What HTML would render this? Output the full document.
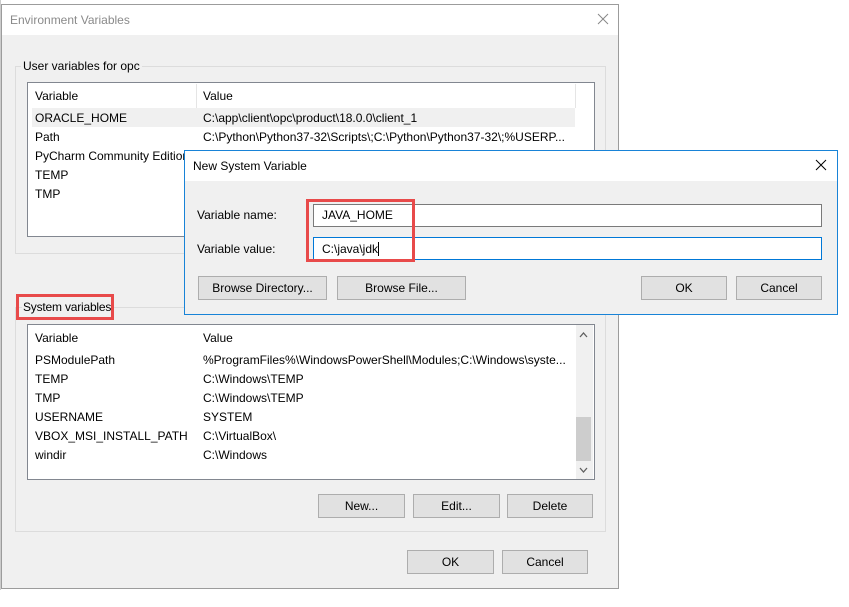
<!DOCTYPE html>
<html><head><style>
*{box-sizing:border-box;margin:0;padding:0}
body{width:849px;height:607px;background:#fff;position:relative;overflow:hidden;font-family:"Liberation Sans",sans-serif;font-size:12px;color:#000}
.a{position:absolute}
.t{position:absolute;white-space:nowrap;line-height:14px}
.btn{position:absolute;background:#e1e1e1;border:1px solid #adadad;text-align:center;line-height:22px;font-size:12px}
.box{position:absolute;background:#fff;border:1px solid #828790}
.red{position:absolute;border:3px solid #e84a4a}
</style></head><body>
<div class="a" style="left:0;top:0;width:1px;height:590px;background:#ccc"></div>
<div class="a" style="left:1px;top:4px;width:618px;height:585px;background:#f0f0f0;border:1px solid #9c9c9c"></div>
<div class="a" style="left:2px;top:5px;width:616px;height:30px;background:#fff"></div>
<div class="t" style="left:10px;top:13px;color:#8a8a8a">Environment Variables</div>
<svg class="a" style="left:597px;top:13px" width="12" height="12"><path d="M1 1L11 11M11 1L1 11" stroke="#888" stroke-width="1"/></svg>
<!-- user group -->
<div class="a" style="left:15px;top:66px;width:591px;height:188px;border:1px solid #dcdcdc"></div>
<div class="t" style="left:21px;top:59px;background:#f0f0f0;padding:0 2px">User variables for opc</div>
<div class="box" style="left:27px;top:82px;width:568px;height:155px"></div>
<div class="a" style="left:196px;top:84px;width:1px;height:24px;background:#e5e5e5"></div>
<div class="a" style="left:575px;top:84px;width:1px;height:24px;background:#e5e5e5"></div>
<div class="a" style="left:32px;top:108px;width:543px;height:19px;background:#f0f0f0"></div>
<div class="t" style="left:35px;top:89px">Variable</div><div class="t" style="left:203px;top:89px">Value</div>
<div class="t" style="left:35px;top:111px">ORACLE_HOME</div><div class="t" style="left:203px;top:111px">C:\app\client\opc\product\18.0.0\client_1</div>
<div class="t" style="left:35px;top:130px">Path</div><div class="t" style="left:203px;top:130px">C:\Python\Python37-32\Scripts\;C:\Python\Python37-32\;%USERP...</div>
<div class="t" style="left:35px;top:149px">PyCharm Community Edition</div>
<div class="t" style="left:35px;top:168px">TEMP</div>
<div class="t" style="left:35px;top:187px">TMP</div>
<!-- system group -->
<div class="a" style="left:15px;top:307px;width:591px;height:225px;border:1px solid #dcdcdc"></div>
<div class="t" style="left:22px;top:300px;background:#f0f0f0;padding:0 1px;letter-spacing:-0.2px">System variables</div>
<div class="red" style="left:16px;top:294px;width:98px;height:26px"></div>
<div class="box" style="left:27px;top:324px;width:568px;height:156px"></div>
<div class="a" style="left:576px;top:325px;width:17px;height:154px;background:#f0f0f0"></div>
<div class="a" style="left:576px;top:417px;width:15px;height:44px;background:#cdcdcd"></div>
<svg class="a" style="left:579px;top:331px" width="10" height="8"><path d="M1 6L4.5 2L8 6" stroke="#606060" fill="none" stroke-width="1.3"/></svg>
<svg class="a" style="left:579px;top:466px" width="10" height="8"><path d="M1 2L4.5 6L8 2" stroke="#606060" fill="none" stroke-width="1.3"/></svg>
<div class="t" style="left:35px;top:331px">Variable</div><div class="t" style="left:203px;top:331px">Value</div>
<div class="t" style="left:35px;top:353px">PSModulePath</div><div class="t" style="left:203px;top:353px">%ProgramFiles%\WindowsPowerShell\Modules;C:\Windows\syste...</div>
<div class="t" style="left:35px;top:372px">TEMP</div><div class="t" style="left:203px;top:372px">C:\Windows\TEMP</div>
<div class="t" style="left:35px;top:391px">TMP</div><div class="t" style="left:203px;top:391px">C:\Windows\TEMP</div>
<div class="t" style="left:35px;top:410px">USERNAME</div><div class="t" style="left:203px;top:410px">SYSTEM</div>
<div class="t" style="left:35px;top:429px">VBOX_MSI_INSTALL_PATH</div><div class="t" style="left:203px;top:429px">C:\VirtualBox\</div>
<div class="t" style="left:35px;top:448px">windir</div><div class="t" style="left:203px;top:448px">C:\Windows</div>
<div class="btn" style="left:318px;top:494px;width:87px;height:24px">New...</div>
<div class="btn" style="left:413px;top:494px;width:87px;height:24px">Edit...</div>
<div class="btn" style="left:507px;top:494px;width:86px;height:24px">Delete</div>
<div class="btn" style="left:407px;top:550px;width:87px;height:24px">OK</div>
<div class="btn" style="left:502px;top:550px;width:86px;height:24px">Cancel</div>
<!-- dialog -->
<div class="a" style="left:184px;top:150px;width:654px;height:165px;background:#f0f0f0;border:1px solid #1883d7"></div>
<div class="a" style="left:185px;top:151px;width:652px;height:30px;background:#fff"></div>
<div class="t" style="left:193px;top:159px">New System Variable</div>
<svg class="a" style="left:815px;top:159px" width="12" height="12"><path d="M1 1L11 11M11 1L1 11" stroke="#000" stroke-width="1"/></svg>
<div class="t" style="left:197px;top:208px">Variable name:</div>
<div class="t" style="left:197px;top:242px">Variable value:</div>
<div class="a" style="left:313px;top:204px;width:509px;height:23px;background:#fff;border:1px solid #7a7a7a"></div>
<div class="a" style="left:313px;top:237px;width:509px;height:23px;background:#fff;border:1px solid #0078d7"></div>
<div class="t" style="left:322px;top:208px">JAVA_HOME</div>
<div class="t" style="left:322px;top:242px">C:\java\jdk<span style="border-left:1px solid #000"></span></div>
<div class="red" style="left:306px;top:199px;width:109px;height:63px"></div>
<div class="btn" style="left:198px;top:276px;width:129px;height:24px">Browse Directory...</div>
<div class="btn" style="left:337px;top:276px;width:129px;height:24px">Browse File...</div>
<div class="btn" style="left:641px;top:276px;width:86px;height:24px">OK</div>
<div class="btn" style="left:736px;top:276px;width:86px;height:24px">Cancel</div>
</body></html>
